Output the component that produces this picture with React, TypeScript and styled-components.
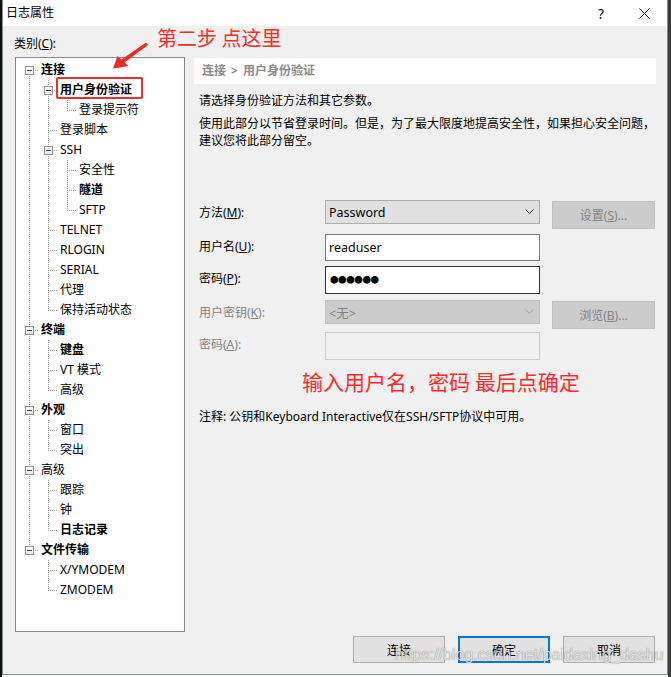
import React from 'react';
import styled, { createGlobalStyle } from 'styled-components';

const Global = createGlobalStyle`
  html, body { margin: 0; padding: 0; background: #fff; }
  body {
    font-family: "Noto Sans", "Noto Sans CJK SC", sans-serif;
    font-size: 12px;
    color: #000;
  }
  * { box-sizing: border-box; }
`;

const Screen = styled.div`
  width: 671px;
  height: 677px;
  display: flex;
  background: #fff;
  overflow: hidden;
`;

const Edge = styled.div<{ $w: number; $c: string }>`
  width: ${(p) => p.$w}px;
  height: 677px;
  background: ${(p) => p.$c};
  flex: none;
`;

const Window = styled.div`
  position: relative;
  width: 666px;
  height: 675px;
  flex: none;
  border: 1px solid #83918a;
  border-top: none;
  background: #f0f0f0;
  display: flex;
  flex-direction: column;
`;

const TitleBar = styled.div`
  height: 26px;
  background: #fff;
  display: flex;
  align-items: center;
  padding-left: 3px;
  flex: none;
`;

const TitleText = styled.div`
  flex: 1;
  font-size: 12px;
  line-height: 26px;
`;

const TitleButton = styled.div<{ $pl?: number }>`
  width: 46px;
  height: 26px;
  display: flex;
  align-items: center;
  justify-content: center;
  padding-left: ${(p) => p.$pl ?? 0}px;
  font-size: 14px;
  color: #111;
`;

const Body = styled.div`
  flex: 1;
  display: flex;
  flex-direction: column;
`;

const Main = styled.div`
  display: grid;
  grid-template-columns: 170px 462px;
  column-gap: 9px;
  padding: 9px 10px 0 12px;
  align-items: start;
`;

const LeftCol = styled.div`
  display: flex;
  flex-direction: column;
`;

const CategoryLabel = styled.div`
  height: 18px;
  line-height: 18px;
  margin-bottom: 4px;
  margin-left: -1px;
`;

const Tree = styled.div`
  position: relative;
  height: 575px;
  border: 1px solid #828790;
  background: #fff;
  padding-top: 2px;
`;

const Row = styled.div`
  display: flex;
  align-items: center;
  height: 20px;
  padding-left: 4px;
`;

type VLine = 'full' | 'top' | 'bottom' | 'none';

const dotV = 'repeating-linear-gradient(to bottom, #a0a0a0 0 1px, transparent 1px 2px)';
const dotH = 'repeating-linear-gradient(to right, #a0a0a0 0 1px, transparent 1px 2px)';

function guideBg(v: VLine, h: boolean) {
  const imgs: string[] = [];
  const sizes: string[] = [];
  const pos: string[] = [];
  if (v === 'full') { imgs.push(dotV); sizes.push('1px 20px'); pos.push('9px 0'); }
  if (v === 'top') { imgs.push(dotV); sizes.push('1px 10px'); pos.push('9px 0'); }
  if (v === 'bottom') { imgs.push(dotV); sizes.push('1px 10px'); pos.push('9px 10px'); }
  if (h) { imgs.push(dotH); sizes.push('10px 1px'); pos.push('9px 10px'); }
  if (!imgs.length) return 'background: none;';
  return `background-image: ${imgs.join(', ')}; background-size: ${sizes.join(', ')}; background-position: ${pos.join(', ')}; background-repeat: no-repeat;`;
}

const Guide = styled.div<{ $v: VLine; $h: boolean; $w: number }>`
  flex: none;
  width: ${(p) => p.$w}px;
  height: 20px;
  display: flex;
  align-items: center;
  ${(p) => guideBg(p.$v, p.$h)}
`;

const Expander = styled.span`
  position: relative;
  width: 9px;
  height: 9px;
  margin-left: 5px;
  border: 1px solid #929292;
  background: linear-gradient(#ffffff, #e8e8e8);
  &::after {
    content: '';
    position: absolute;
    left: 1px;
    top: 3px;
    width: 5px;
    height: 1px;
    background: #27467f;
  }
`;

const NodeLabel = styled.span<{ $bold?: boolean }>`
  white-space: nowrap;
  line-height: 20px;
  font-weight: ${(p) => (p.$bold ? 700 : 400)};
`;

const RedMark = styled.div`
  position: absolute;
  left: 40px;
  top: 19px;
  width: 87px;
  height: 22px;
  border: 2px solid #e8312c;
  border-radius: 2px;
`;

const RightCol = styled.div`
  padding-top: 23px;
  display: flex;
  flex-direction: column;
`;

const Breadcrumb = styled.div`
  height: 26px;
  line-height: 26px;
  background: #fff;
  padding-left: 8px;
  color: #8a8a8a;
  font-weight: 700;
  word-spacing: 2px;
`;

const Para = styled.div<{ $mt: number }>`
  margin-top: ${(p) => p.$mt}px;
  padding-left: 5px;
  line-height: 17px;
`;

const FormGrid = styled.div`
  margin-top: 51px;
  padding-left: 5px;
  display: grid;
  grid-template-columns: 114px 215px 103px;
  grid-template-rows: 34px 32px 34px 32px 28px;
  column-gap: 12px;
  align-items: start;
`;

const FieldLabel = styled.div<{ $disabled?: boolean }>`
  line-height: 26px;
  color: ${(p) => (p.$disabled ? '#838383' : '#000')};
`;

const Select = styled.div<{ $disabled?: boolean }>`
  height: 24px;
  display: flex;
  align-items: center;
  justify-content: space-between;
  padding: 0 5px 0 3px;
  background: ${(p) => (p.$disabled ? '#cccccc' : '#e1e1e1')};
  border: 1px solid ${(p) => (p.$disabled ? '#bfbfbf' : '#adadad')};
  color: ${(p) => (p.$disabled ? '#838383' : '#000')};
  font-size: 12.5px;
`;

const Input = styled.div<{ $h: number; $border: string; $bg?: string }>`
  height: ${(p) => p.$h}px;
  display: flex;
  align-items: center;
  padding-left: 3px;
  background: ${(p) => p.$bg ?? '#fff'};
  border: 1px solid ${(p) => p.$border};
  font-size: 12.5px;
`;

const Dots = styled.span`
  font-size: 8.5px;
  letter-spacing: -0.4px;
  line-height: 1;
  padding-left: 1px;
`;

const SideButton = styled.div`
  height: 28px;
  margin-top: 1px;
  display: flex;
  align-items: center;
  justify-content: center;
  background: #cccccc;
  border: 1px solid #bfbfbf;
  color: #838383;
`;

const Annotation = styled.div<{ $size: number }>`
  color: #ff2b2b;
  font-size: ${(p) => p.$size}px;
  font-family: "Noto Sans CJK SC", sans-serif;
  white-space: nowrap;
`;

const InlineNote = styled(Annotation)`
  margin-top: 8px;
  padding-left: 108px;
  line-height: 26px;
`;

const OverlayNote = styled(Annotation)`
  position: absolute;
  left: 154px;
  top: 26px;
  line-height: 24px;
`;

const ArrowSvg = styled.svg`
  position: absolute;
  left: 105px;
  top: 36px;
`;

const Footer = styled.div`
  margin-top: 4px;
  padding-right: 12px;
  display: flex;
  justify-content: flex-end;
  gap: 13px;
`;

const DlgButton = styled.div<{ $primary?: boolean }>`
  width: 92px;
  height: 27px;
  display: flex;
  align-items: center;
  justify-content: center;
  background: #e1e1e1;
  border: ${(p) => (p.$primary ? '2px solid #0078d7' : '1px solid #adadad')};
`;

const Watermark = styled.div`
  position: absolute;
  left: 392px;
  top: 645px;
  font-family: "Liberation Sans", Arial, sans-serif;
  font-size: 16px;
  line-height: 20px;
  color: rgba(255, 255, 255, 0.8);
  text-shadow: 0 0 1px rgba(0, 0, 0, 0.6);
  white-space: nowrap;
  pointer-events: none;
`;

type TNode = { t: string; l: number; b?: boolean; kids?: boolean };

const nodes: TNode[] = [
  { t: '连接', l: 0, b: true, kids: true },
  { t: '用户身份验证', l: 1, b: true, kids: true },
  { t: '登录提示符', l: 2 },
  { t: '登录脚本', l: 1 },
  { t: 'SSH', l: 1, kids: true },
  { t: '安全性', l: 2 },
  { t: '隧道', l: 2, b: true },
  { t: 'SFTP', l: 2 },
  { t: 'TELNET', l: 1 },
  { t: 'RLOGIN', l: 1 },
  { t: 'SERIAL', l: 1 },
  { t: '代理', l: 1 },
  { t: '保持活动状态', l: 1 },
  { t: '终端', l: 0, b: true, kids: true },
  { t: '键盘', l: 1, b: true },
  { t: 'VT 模式', l: 1 },
  { t: '高级', l: 1 },
  { t: '外观', l: 0, b: true, kids: true },
  { t: '窗口', l: 1 },
  { t: '突出', l: 1 },
  { t: '高级', l: 0, kids: true },
  { t: '跟踪', l: 1 },
  { t: '钟', l: 1 },
  { t: '日志记录', l: 1, b: true },
  { t: '文件传输', l: 0, b: true, kids: true },
  { t: 'X/YMODEM', l: 1 },
  { t: 'ZMODEM', l: 1 },
];

function hasNextAt(i: number, level: number) {
  for (let j = i + 1; j < nodes.length; j++) {
    if (nodes[j].l < level) return false;
    if (nodes[j].l === level) return true;
  }
  return false;
}

const Chevron = ({ color }: { color: string }) => (
  <svg width="9" height="6" viewBox="0 0 9 6">
    <path d="M0.5 0.5 L4.5 4.5 L8.5 0.5" fill="none" stroke={color} strokeWidth="1" />
  </svg>
);

const CloseIcon = () => (
  <svg width="11" height="11" viewBox="0 0 11 11">
    <path d="M0.5 0.5 L10.5 10.5 M10.5 0.5 L0.5 10.5" stroke="#111" strokeWidth="1" />
  </svg>
);

export default function App() {
  return (
    <>
      <Global />
      <Screen>
        <Edge $w={2} $c="#101010" />
        <Window>
          <TitleBar>
            <TitleText>日志属性</TitleText>
            <TitleButton $pl={6}>?</TitleButton>
            <TitleButton>
              <CloseIcon />
            </TitleButton>
          </TitleBar>
          <Body>
            <Main>
              <LeftCol>
                <CategoryLabel>
                  类别(<u>C</u>):
                </CategoryLabel>
                <Tree>
                  {nodes.map((n, i) => {
                    const cells: React.ReactNode[] = [];
                    for (let k = 0; k < n.l; k++) {
                      cells.push(<Guide key={k} $w={19} $v={hasNextAt(i, k) ? 'full' : 'none'} $h={false} />);
                    }
                    const top = i > 0;
                    const bottom = hasNextAt(i, n.l);
                    const v: VLine = top && bottom ? 'full' : top ? 'top' : bottom ? 'bottom' : 'none';
                    cells.push(
                      <Guide key="own" $w={21} $v={v} $h={true}>
                        {n.kids && <Expander />}
                      </Guide>
                    );
                    return (
                      <Row key={i}>
                        {cells}
                        <NodeLabel $bold={n.b}>{n.t}</NodeLabel>
                      </Row>
                    );
                  })}
                  <RedMark />
                </Tree>
              </LeftCol>
              <RightCol>
                <Breadcrumb>连接 &gt; 用户身份验证</Breadcrumb>
                <Para $mt={8}>请选择身份验证方法和其它参数。</Para>
                <Para $mt={6}>
                  使用此部分以节省登录时间。但是，为了最大限度地提高安全性，如果担心安全问题，
                  <br />
                  建议您将此部分留空。
                </Para>
                <FormGrid>
                  <FieldLabel>
                    方法(<u>M</u>):
                  </FieldLabel>
                  <Select>
                    <span>Password</span>
                    <Chevron color="#222" />
                  </Select>
                  <SideButton>
                    <span>
                      设置(<u>S</u>)...
                    </span>
                  </SideButton>

                  <FieldLabel>
                    用户名(<u>U</u>):
                  </FieldLabel>
                  <Input $h={27} $border="#7a7a7a">readuser</Input>
                  <div />

                  <FieldLabel>
                    密码(<u>P</u>):
                  </FieldLabel>
                  <Input $h={28} $border="#333333">
                    <Dots>●●●●●●</Dots>
                  </Input>
                  <div />

                  <FieldLabel $disabled>
                    用户密钥(<u>K</u>):
                  </FieldLabel>
                  <Select $disabled>
                    <span>&lt;无&gt;</span>
                    <Chevron color="#a6a6a6" />
                  </Select>
                  <SideButton>
                    <span>
                      浏览(<u>B</u>)...
                    </span>
                  </SideButton>

                  <FieldLabel $disabled>
                    密码(<u>A</u>):
                  </FieldLabel>
                  <Input $h={28} $border="#cccccc" $bg="#f0f0f0" />
                  <div />
                </FormGrid>
                <InlineNote $size={21}>输入用户名，密码 最后点确定</InlineNote>
                <Para $mt={14}>注释: 公钥和Keyboard Interactive仅在SSH/SFTP协议中可用。</Para>
              </RightCol>
            </Main>
            <Footer>
              <DlgButton>连接</DlgButton>
              <DlgButton $primary>确定</DlgButton>
              <DlgButton>取消</DlgButton>
            </Footer>
          </Body>
          <OverlayNote $size={20}>第二步 点这里</OverlayNote>
          <ArrowSvg width="44" height="36" viewBox="108 36 44 36">
            <polygon
              points="113,68.5 117.5,56 121.5,59.5 146,42.5 148,45 124.5,62.5 128.5,66"
              fill="#ee2a24"
            />
          </ArrowSvg>
          <Watermark>https://blog.csdn.net/paidaxing_dashu</Watermark>
        </Window>
        <Edge $w={3} $c="#3a3a3a" />
      </Screen>
    </>
  );
}
